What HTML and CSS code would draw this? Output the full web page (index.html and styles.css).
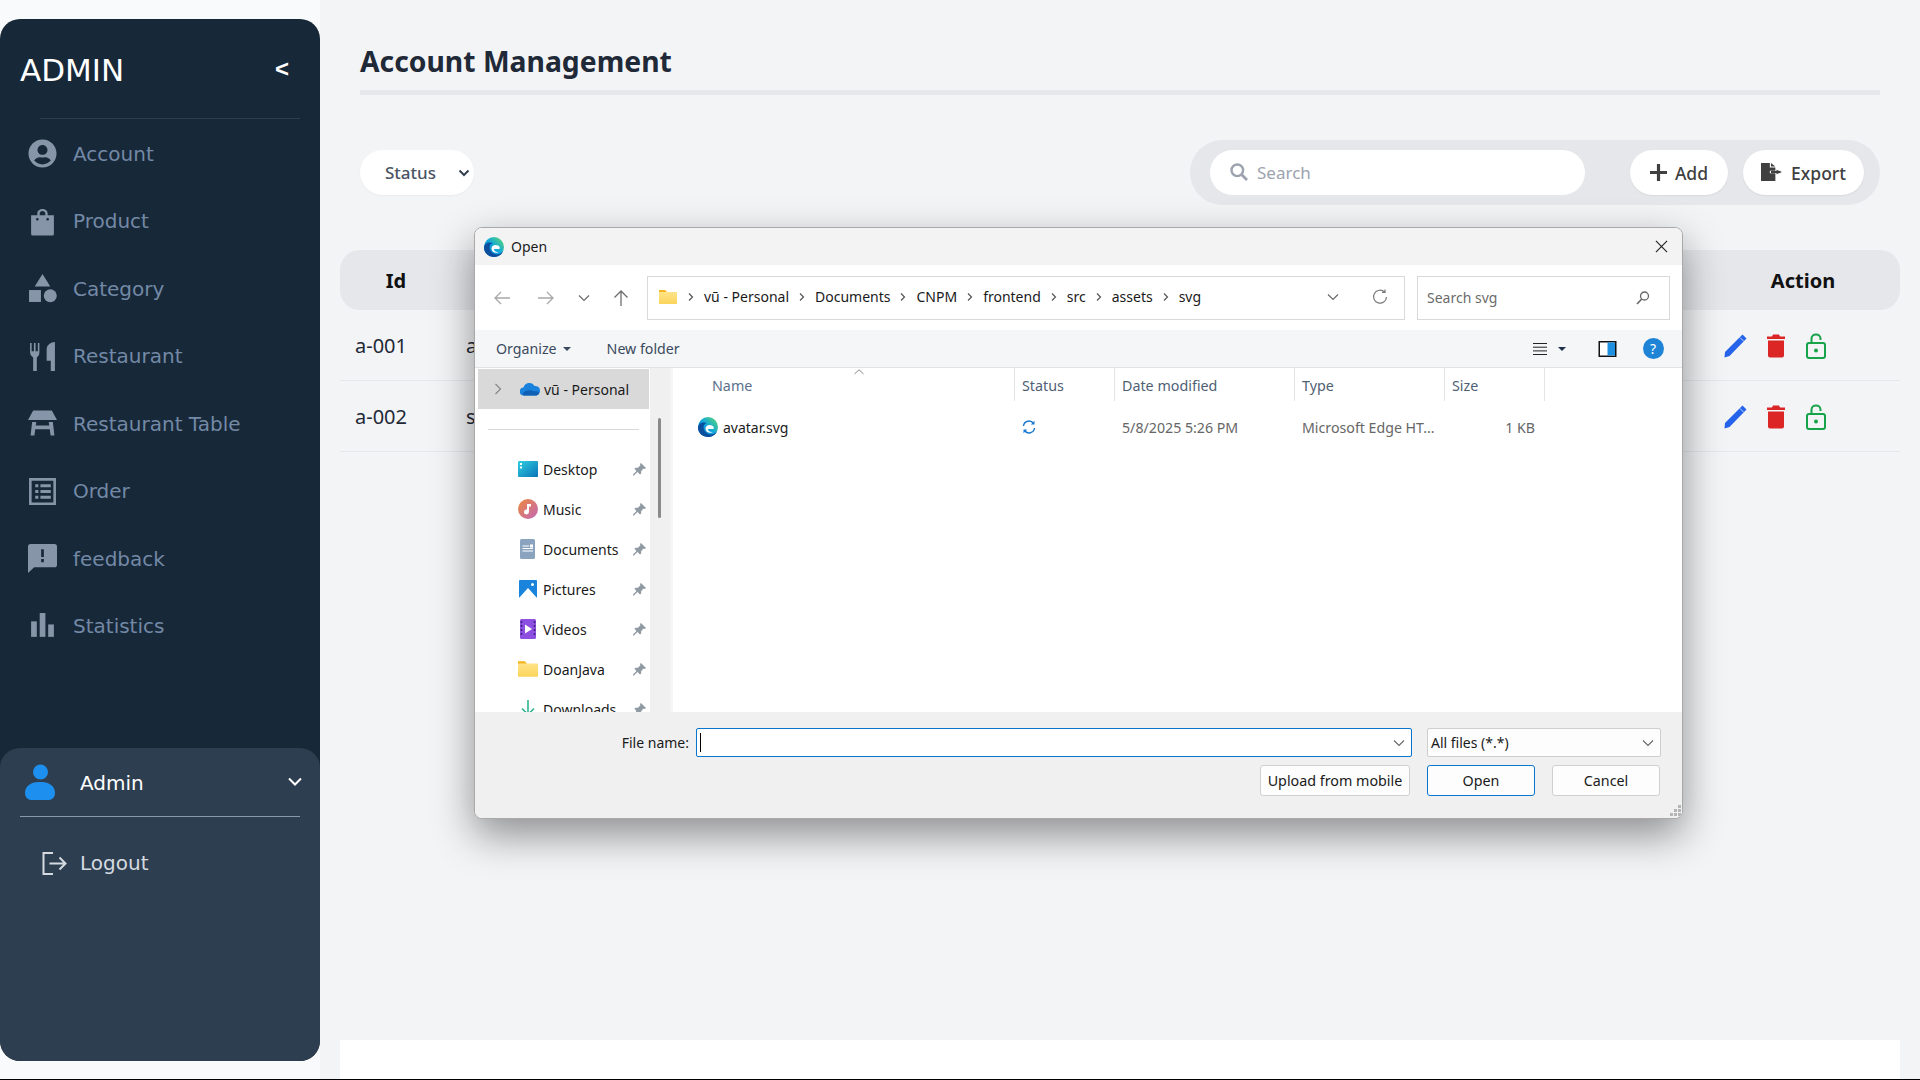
FILE: index.html
```html
<!DOCTYPE html>
<html lang="en">
<head>
<meta charset="utf-8">
<title>Account Management</title>
<link rel="stylesheet" href="styles.css">
</head>
<body>
<svg class="defs" width="0" height="0" aria-hidden="true">
  <defs>
    <linearGradient id="edgeg" x1="0" y1="1" x2="1" y2="0"><stop offset="0" stop-color="#0a72c9"/><stop offset=".5" stop-color="#10a6dc"/><stop offset="1" stop-color="#62dc6c"/></linearGradient>
    <linearGradient id="fold" x1="0" y1="0" x2="0" y2="1"><stop offset="0" stop-color="#ffe68f"/><stop offset="1" stop-color="#fbd45c"/></linearGradient>
    <linearGradient id="desk" x1="0" y1="0" x2="1" y2="1"><stop offset="0" stop-color="#2fd0e0"/><stop offset="1" stop-color="#0b73b8"/></linearGradient>
    <linearGradient id="mus" x1="0" y1="0" x2="1" y2="1"><stop offset="0" stop-color="#ef8a3c"/><stop offset="1" stop-color="#c066b8"/></linearGradient>
    <symbol id="edge" viewBox="0 0 20 20">
      <circle cx="10" cy="10" r="10" fill="url(#edgeg)"/>
      <path d="M0 11C0 6 5 4.500 9 6 5 7 4.500 11.500 7.500 15 10.500 18.500 15.500 18 19 14.500 17.500 18 14 20 10 20 4.500 20 0 16 0 11Z" fill="#0b4f9e"/>
      <path d="M7.500 11.500C7.500 8.500 11 7 14 8.500 16 9.500 16.500 11.500 15 12L10 12C10 14 12 15.500 15 15 12 16.500 7.500 15.500 7.500 11.500Z" fill="#fff"/>
    </symbol>
    <symbol id="pin" viewBox="0 0 14 14"><path d="M8.500 0 14 5.500 12.800 6.500 11.500 6 8.800 8.700 8.800 11.300 7.500 12.500 4.800 9.700 1 13.500 0 13.500 0 12.500 3.800 8.700 1.500 6.300 2.700 5.100 5.300 5.100 8 2.500 7.500 1.200Z" fill="#8f9aa3"/></symbol>
    <symbol id="chev" viewBox="0 0 8 10"><path d="M2 1.500 5.500 5 2 8.500" fill="none" stroke="#555" stroke-width="1.200"/></symbol>
    <symbol id="down" viewBox="0 0 12 8"><path d="M1 1.500 6 6.500 11 1.500" fill="none" stroke="#666" stroke-width="1.100"/></symbol>
    <symbol id="pencil" viewBox="0 0 24 24"><path d="M19.500 .5 23.500 4.500 6.500 22 1.500 23.500 2 18Z" fill="#2563eb"/><path d="M17 3.500 20.800 7.300" stroke="#f3f4f6" stroke-width=".8"/></symbol>
    <symbol id="trash" viewBox="0 0 18 24"><path d="M6 .5H12L13 2.500H18V5H0V2.500H5ZM1 6.500H17V21.500A2 2 0 0 1 15 23.500H3A2 2 0 0 1 1 21.500Z" fill="#dc2626"/></symbol>
    <symbol id="lock" viewBox="0 0 22 26"><path d="M6.500 10V5.500C6.500 0 15.500 0 15.500 5.500V7" fill="none" stroke="#16a34a" stroke-width="2"/><rect x="2" y="10" width="18" height="15" rx="2" fill="none" stroke="#16a34a" stroke-width="2"/><circle cx="11" cy="17.500" r="2" fill="#16a34a"/></symbol>
  </defs>
</svg>

<div class="app">
  <aside class="sidebar">
    <div class="side-top">
      <div class="brand"><span class="brand-name">ADMIN</span><span class="collapse">&lt;</span></div>
      <div class="side-rule"></div>
      <nav class="menu">
        <a class="menu-item"><svg class="mi" viewBox="0 0 512 512"><path d="M256 8C119 8 8 119 8 256s111 248 248 248 248-111 248-248S393 8 256 8zm0 96c48.600 0 88 39.400 88 88s-39.400 88-88 88-88-39.400-88-88 39.400-88 88-88zm0 344c-58.700 0-111.300-26.600-146.500-68.200 18.800-35.400 55.600-59.800 98.500-59.800 2.400 0 4.800.4 7.100 1.100 13 4.200 26.600 6.900 40.900 6.900 14.300 0 28-2.700 40.900-6.900 2.300-.7 4.700-1.100 7.100-1.100 42.900 0 79.700 24.400 98.500 59.800C367.300 421.400 314.700 448 256 448z"/></svg>Account</a>
        <a class="menu-item"><svg class="mi" viewBox="0 0 28 28"><path d="M9 8V6.500C9 .5 19 .5 19 6.500V8H25V26A1.500 1.500 0 0 1 23.500 27.500H4.500A1.500 1.500 0 0 1 3 26V8ZM11.300 8H16.700V6.500C16.700 3 11.300 3 11.300 6.500ZM9 10.500A1.300 1.300 0 0 0 9 13.100 1.300 1.300 0 0 0 9 10.500ZM19 10.500A1.300 1.300 0 0 0 19 13.100 1.300 1.300 0 0 0 19 10.500Z" fill-rule="evenodd"/></svg>Product</a>
        <a class="menu-item"><svg class="mi" viewBox="0 0 28 28"><path d="M14 0 21.500 12H6.500Z"/><rect x="1" y="15.500" width="11.500" height="11.500"/><circle cx="21.500" cy="21" r="6.300"/></svg>Category</a>
        <a class="menu-item"><svg class="mi" viewBox="0 0 28 28"><path d="M2 1H3.500V9H5.700V1H7.300V9H9.500V1H11V10C11 12.500 10 14 8.500 15V28H5V15C3.500 14 2 12.500 2 10ZM26 0V28H22V18H18V7C18 3 22 0 26 0Z"/></svg>Restaurant</a>
        <a class="menu-item"><svg class="mi" viewBox="0 0 28 28"><path d="M5 1.500H23L28 10.500H0ZM4 12.500H8L7.500 16H20.500L20 12.500H24L25.500 25.500H21.800L21 19.500H7L6.200 25.500H2.500Z"/></svg>Restaurant Table</a>
        <a class="menu-item"><svg class="mi" viewBox="0 0 28 28"><path d="M1 1H27V27H1ZM3.500 3.500V24.500H24.500V3.500ZM7 7H10V10H7ZM12 7H22V10H12ZM7 12.500H10V15.500H7ZM12 12.500H22V15.500H12ZM7 18H10V21H7ZM12 18H22V21H12Z" fill-rule="evenodd"/></svg>Order</a>
        <a class="menu-item"><svg class="mi" viewBox="0 0 28 28"><path d="M2.500 0H25.500A2.500 2.500 0 0 1 28 2.500V20A2.500 2.500 0 0 1 25.500 22.500H6L0 28V2.500A2.500 2.500 0 0 1 2.500 0ZM12.700 5V12.500H15.300V5ZM12.700 14.500V17.500H15.300V14.500Z" fill-rule="evenodd"/></svg>feedback</a>
        <a class="menu-item"><svg class="mi" viewBox="0 0 28 28"><rect x="3" y="9" width="5.500" height="15"/><rect x="11.300" y="1" width="5.500" height="23"/><rect x="19.500" y="12" width="5.500" height="12"/></svg>Statistics</a>
      </nav>
    </div>
    <div class="side-user">
      <div class="user-row">
        <svg class="avatar" viewBox="0 0 30 36"><circle cx="15.500" cy="8" r="7.500" fill="#1d90ef"/><path d="M13 18H17C24 18 30 22 30 29 30 33 27 36 24 36H6C3 36 0 33 0 29 0 22 6 18 13 18Z" fill="#1d90ef"/></svg>
        <span class="user-name">Admin</span>
        <svg class="user-chev" viewBox="0 0 14 10"><path d="M1 1.500 7 7.500 13 1.500" fill="none" stroke="#fff" stroke-width="2"/></svg>
      </div>
      <div class="user-rule"></div>
      <a class="logout"><svg class="logout-ic" viewBox="0 0 25 23"><path d="M11 1H1.500V22H11M7.500 11.500H23.500M17.500 5.500 23.500 11.500 17.500 17.500" fill="none" stroke="#d5dae0" stroke-width="2"/></svg>Logout</a>
    </div>
  </aside>

  <main class="content">
    <header class="page-head"><h1 class="page-title">Account Management</h1></header>
    <section class="tools">
      <div class="status-pill"><span>Status</span><svg class="status-chev" viewBox="0 0 12 8"><path d="M1.500 1.500 6 6 10.500 1.500" fill="none" stroke="#374151" stroke-width="2"/></svg></div>
      <div class="tool-group">
        <div class="search-pill"><svg class="search-ic" viewBox="0 0 18 18"><circle cx="7.300" cy="7.300" r="5.800" fill="none" stroke="#9ca3af" stroke-width="2.400"/><path d="M11.500 11.500 17 17" stroke="#9ca3af" stroke-width="2.800"/></svg><span>Search</span></div>
        <button class="tool-btn btn-add"><svg class="tb-ic" viewBox="0 0 16 16"><path d="M6.500 0H9.500V6.500H16V9.500H9.500V16H6.500V9.500H0V6.500H6.500Z" fill="#404040"/></svg>Add</button>
        <button class="tool-btn btn-export"><svg class="tb-ic tb-ex" viewBox="0 0 19 20" preserveAspectRatio="none"><path d="M0 0H8V5H13V8.500H8V11.500H13V20H0ZM9 0 13 4H9ZM14 7.500 19 10 14 12.500V11H9V9H14Z" fill="#404040"/></svg>Export</button>
      </div>
    </section>
    <section class="table">
      <div class="t-head"><span class="th-id">Id</span><span></span><span class="th-act">Action</span></div>
      <div class="t-row"><span class="td-id">a-001</span><span class="td-name">a</span><span class="td-act"><svg class="a-pen"><use href="#pencil"/></svg><svg class="a-trash"><use href="#trash"/></svg><svg class="a-lock"><use href="#lock"/></svg></span></div>
      <div class="t-row"><span class="td-id">a-002</span><span class="td-name">s</span><span class="td-act"><svg class="a-pen"><use href="#pencil"/></svg><svg class="a-trash"><use href="#trash"/></svg><svg class="a-lock"><use href="#lock"/></svg></span></div>
    </section>
    <div class="foot-bar"></div>
  </main>
</div>

<div class="dialog">
  <div class="d-title"><svg class="d-edge"><use href="#edge"/></svg><span class="d-title-text">Open</span><svg class="d-close" viewBox="0 0 14 14"><path d="M1 1 13 13M13 1 1 13" stroke="#222" stroke-width="1.200"/></svg></div>
  <div class="d-addr">
    <svg class="nav-back" viewBox="0 0 16 14"><path d="M16 7H1M7 1 1 7 7 13" fill="none" stroke="#a8a8a8" stroke-width="1.300"/></svg>
    <svg class="nav-fwd" viewBox="0 0 16 14"><path d="M0 7H15M9 1 15 7 9 13" fill="none" stroke="#a8a8a8" stroke-width="1.300"/></svg>
    <svg class="nav-dn"><use href="#down"/></svg>
    <svg class="nav-up" viewBox="0 0 16 16"><path d="M8 16V1M1.500 7.500 8 1 14.500 7.500" fill="none" stroke="#6e6e6e" stroke-width="1.300"/></svg>
    <div class="addr-box">
      <svg class="addr-fold" viewBox="0 0 18 14"><path d="M0 0H6L8 2H18V14H0Z" fill="url(#fold)"/><path d="M0 0H6L8 2H0Z" fill="#f4b622"/></svg>
      <svg class="cr"><use href="#chev"/></svg><span>vũ - Personal</span>
      <svg class="cr"><use href="#chev"/></svg><span>Documents</span>
      <svg class="cr"><use href="#chev"/></svg><span>CNPM</span>
      <svg class="cr"><use href="#chev"/></svg><span>frontend</span>
      <svg class="cr"><use href="#chev"/></svg><span>src</span>
      <svg class="cr"><use href="#chev"/></svg><span>assets</span>
      <svg class="cr"><use href="#chev"/></svg><span>svg</span>
      <svg class="addr-dn"><use href="#down"/></svg>
      <svg class="addr-ref" viewBox="0 0 16 16"><path d="M12.500 3A6.500 6.500 0 1 0 14.500 8M13 .5V3.500H10" fill="none" stroke="#777" stroke-width="1.200"/></svg>
    </div>
    <div class="search-box"><span>Search svg</span><svg class="sb-ic" viewBox="0 0 14 14"><circle cx="8.500" cy="5" r="4" fill="none" stroke="#666" stroke-width="1.300"/><path d="M5.800 8 1 13" stroke="#666" stroke-width="1.600"/></svg></div>
  </div>
  <div class="d-bar">
    <span class="org">Organize</span><span class="caret"></span><span class="newf">New folder</span>
    <svg class="view-ic" viewBox="0 0 14 12"><path d="M0 .5H14M0 4.200H14M0 7.900H14M0 11.500H14" stroke="#222" stroke-width="1"/></svg><span class="caret caret-dark"></span>
    <svg class="pane-ic" viewBox="0 0 18 16"><rect x=".75" y=".75" width="16.500" height="14.500" fill="#fff" stroke="#111" stroke-width="1.500"/><rect x="9" y="1.500" width="7.500" height="13" fill="#1f8fe0"/></svg>
    <span class="help">?</span>
  </div>
  <div class="d-body">
    <div class="d-nav">
      <div class="n-sel"><svg class="n-chev" viewBox="0 0 8 12"><path d="M1.500 1 6.500 6 1.500 11" fill="none" stroke="#888" stroke-width="1.200"/></svg><svg class="n-ic n-cloud" viewBox="0 0 20 13"><path d="M4 13A4 4 0 0 1 3.500 5 6 6 0 0 1 14.500 3.500 4.500 4.500 0 0 1 16 13Z" fill="#1a82dc"/><path d="M4 13C1 13 4 8 8 8 11 7 14 9 15 9 17 8 20 10 19 11 18.500 12.500 17 13 16 13Z" fill="#0f5fb4"/></svg><span>vũ - Personal</span></div>
      <div class="n-div"><i></i></div>
      <div class="n-item"><svg class="n-ic" viewBox="0 0 20 16"><rect width="20" height="16" rx="1" fill="url(#desk)"/><rect x="2" y="2" width="2" height="2" fill="#fff"/><rect x="2" y="5.500" width="2" height="2" fill="#fff"/></svg><span>Desktop</span><svg class="n-pin"><use href="#pin"/></svg></div>
      <div class="n-item"><svg class="n-ic" viewBox="0 0 20 20"><circle cx="10" cy="10" r="10" fill="url(#mus)"/><path d="M9 5H13V7.500H11V13A2.500 2.500 0 1 1 9 10.600Z" fill="#fff"/></svg><span>Music</span><svg class="n-pin"><use href="#pin"/></svg></div>
      <div class="n-item"><svg class="n-ic" viewBox="0 0 20 20"><rect x="2" width="15" height="20" rx="1.500" fill="#8aa4c0"/><path d="M4.500 7H11M4.500 9.500H15M4.500 12H15" stroke="#fff" stroke-width="1"/><rect x="12" y="5.500" width="3" height="3" fill="#fff"/></svg><span>Documents</span><svg class="n-pin"><use href="#pin"/></svg></div>
      <div class="n-item"><svg class="n-ic" viewBox="0 0 20 20"><rect x="1" y="1" width="18" height="18" rx="1" fill="#1a84dc"/><path d="M1 19 10 9 19 19Z" fill="#fff"/><circle cx="14.500" cy="5.500" r="1.500" fill="#fff"/></svg><span>Pictures</span><svg class="n-pin"><use href="#pin"/></svg></div>
      <div class="n-item"><svg class="n-ic" viewBox="0 0 20 20"><rect x="2" width="16" height="20" rx="1.500" fill="#8d4fe0"/><path d="M7 5.500 14 10 7 14.500Z" fill="#fff"/><path d="M3.500 2V18M16.500 2V18" stroke="#3c2080" stroke-width="1.500" stroke-dasharray="2 2"/></svg><span>Videos</span><svg class="n-pin"><use href="#pin"/></svg></div>
      <div class="n-item"><svg class="n-ic" viewBox="0 0 18 14"><path d="M0 0H6L8 2H18V14H0Z" fill="url(#fold)"/><path d="M0 0H6L8 2H0Z" fill="#f4b622"/></svg><span>DoanJava</span><svg class="n-pin"><use href="#pin"/></svg></div>
      <div class="n-item"><svg class="n-ic" viewBox="0 0 20 20"><path d="M10 1V15M4 9.500 10 15.500 16 9.500M3 19H17" fill="none" stroke="#2fb58f" stroke-width="1.600"/></svg><span>Downloads</span><svg class="n-pin"><use href="#pin"/></svg></div>
    </div>
    <div class="d-scroll"><i class="thumb"></i></div>
    <div class="d-gut"></div>
    <div class="d-files">
      <svg class="sort" viewBox="0 0 10 6"><path d="M.5 5 5 .8 9.500 5" fill="none" stroke="#888" stroke-width="1"/></svg>
      <div class="f-head"><span class="fh fh-name">Name</span><span class="fh">Status</span><span class="fh">Date modified</span><span class="fh">Type</span><span class="fh">Size</span></div>
      <div class="f-row">
        <span class="fc fc-name"><svg class="f-edge"><use href="#edge"/></svg>avatar.svg</span>
        <span class="fc"><svg class="sync" viewBox="0 0 14 14"><path d="M1.500 6A5.500 5.500 0 0 1 11.500 3.500M12.500 8A5.500 5.500 0 0 1 2.500 10.500" fill="none" stroke="#1878d0" stroke-width="1.400"/><path d="M12.500 .8V4.500H8.800ZM1.500 13.200V9.500H5.200Z" fill="#1878d0"/></svg></span>
        <span class="fc fc-dim">5/8/2025 5:26 PM</span>
        <span class="fc fc-dim">Microsoft Edge HT...</span>
        <span class="fc fc-dim fc-size">1 KB</span>
      </div>
    </div>
  </div>
  <div class="d-foot">
    <div class="foot-line">
      <label class="fn-label">File name:</label>
      <div class="fn-input"><i class="cursor"></i><svg class="fld-dn"><use href="#down"/></svg></div>
      <div class="fn-filter"><span>All files (*.*)</span><svg class="fld-dn"><use href="#down"/></svg></div>
    </div>
    <div class="foot-line foot-btns">
      <button class="d-btn d-upload">Upload from mobile</button>
      <button class="d-btn d-open">Open</button>
      <button class="d-btn d-cancel">Cancel</button>
    </div>
    <svg class="grip" viewBox="0 0 12 12"><path d="M9 0h3v3H9zM5 4h3v3H5zM9 4h3v3H9zM1 8h3v3H1zM5 8h3v3H5zM9 8h3v3H9z" fill="#b5b5b5"/></svg>
  </div>
</div>
</body>
</html>
```

FILE: styles.css
```css
* { box-sizing: border-box; }
html, body { margin: 0; height: 1080px; overflow: hidden; }
body { background: #f9fafb; border-bottom: 1px solid #000; font-family: "Noto Sans", sans-serif; position: relative; }
.defs { position: absolute; }
.app { display: flex; height: 1079px; }

/* sidebar */
.sidebar { width: 320px; flex: none; margin: 19px 0 18px; border-radius: 20px; background: #172839; display: flex; flex-direction: column; overflow: hidden; font-family: "DejaVu Sans", sans-serif; }
.side-top { flex: 1; }
.brand { height: 99px; padding: 3px 31px 0 20px; display: flex; justify-content: space-between; align-items: center; }
.brand-name { font-size: 31px; color: #fff; }
.collapse { font: 700 24px "Liberation Sans", sans-serif; color: #fff; margin-top: -2px; }
.side-rule { height: 1px; margin: 0 20px 0 40px; background: #2d3e50; }
.menu { display: flex; flex-direction: column; padding-top: 1px; }
.menu-item { height: 67.500px; display: flex; align-items: center; padding-left: 28px; color: #7389a5; font-size: 20px; }
.mi { width: 29px; height: 29px; margin-right: 16px; fill: #8795a8; flex: none; }
.side-user { height: 313px; background: #2d3e50; border-radius: 20px; flex: none; }
.user-row { height: 68px; display: flex; align-items: center; padding: 0 18px 0 25px; }
.avatar { width: 30px; height: 36px; }
.user-name { font-size: 20px; color: #fff; margin-left: 25px; flex: 1; margin-top: 2px; }
.user-chev { width: 14px; height: 10px; }
.user-rule { height: 1px; margin: 0 20px; background: #8a99a9; }
.logout { display: flex; align-items: center; margin-top: 34px; padding-left: 42px; color: #d5dae0; font-size: 20px; line-height: 24px; }
.logout-ic { width: 25px; height: 23px; margin-right: 13px; }

/* main */
.content { flex: 1; display: flex; flex-direction: column; background: #f3f4f6; padding: 0 20px; }
.page-head { margin: 42px 20px 0; height: 53px; border-bottom: 5px solid #e5e7eb; }
.page-title { margin: 0; font-size: 28.300px; line-height: 38px; font-weight: 700; color: #1f2937; }
.tools { margin: 45px 20px 0; height: 65px; display: flex; justify-content: space-between; align-items: center; }
.status-pill { width: 114px; height: 45px; border-radius: 23px; background: #fff; display: flex; align-items: center; padding-left: 25px; font-size: 17px; font-weight: 500; color: #4b5563; box-shadow: 0 1px 2px rgba(0,0,0,.04); }
.status-pill span { flex: 1; }
.status-chev { width: 12px; height: 8px; margin-right: 4px; }
.tool-group { width: 690px; height: 65px; background: #e5e7eb; border-radius: 33px; display: flex; align-items: center; padding: 0 15px 0 20px; }
.search-pill { width: 375px; height: 45px; border-radius: 23px; background: #fff; display: flex; align-items: center; padding-left: 20px; font-size: 17px; color: #9ca3af; }
.search-ic { width: 18px; height: 18px; margin-right: 9px; margin-top: -2px; }
.tool-btn { height: 45px; border: 0; border-radius: 23px; background: #fff; display: flex; align-items: center; justify-content: center; font: 500 17.500px "Noto Sans", sans-serif; color: #404040; padding: 0; box-shadow: 0 1px 2px rgba(0,0,0,.06); }
.btn-add { width: 98px; margin-left: 45px; }
.btn-export { width: 121px; margin-left: 15px; }
.tb-ic { width: 17px; height: 17px; margin-right: 8px; margin-top: -1px; }
.tb-ex { width: 21px; height: 18px; margin-right: 9px; margin-top: -2px; }

.table { margin-top: 45px; }
.t-head { height: 60px; background: #e5e7eb; border-radius: 20px; display: grid; grid-template-columns: 112px 1fr 194px; align-items: center; font-size: 20px; font-weight: 700; color: #111; }
.th-id, .th-act { text-align: center; }
.t-row { height: 71px; border-bottom: 1px solid #e5e7eb; display: grid; grid-template-columns: 110px 1fr 194px; align-items: center; font-size: 20px; color: #1f2937; }
.td-id { padding-left: 15px; }
.td-name { padding-left: 16px; }
.td-act { display: flex; align-items: center; padding: 2px 0 0 17px; }
.a-pen { width: 24px; height: 24px; margin-right: 20px; }
.a-trash { width: 18px; height: 24px; margin-right: 20px; }
.a-lock { width: 22px; height: 26px; }
.foot-bar { margin-top: auto; height: 39px; background: #fff; }

/* dialog */
.dialog { position: absolute; left: 474px; top: 227px; width: 1209px; height: 592px; background: #fff; border: 1px solid #a9a9a9; border-radius: 8px; box-shadow: 0 16px 40px rgba(0,0,0,.42); overflow: hidden; display: flex; flex-direction: column; font-size: 14px; color: #1a1a1a; }
.d-title { height: 37px; flex: none; background: #f3f3f3; display: flex; align-items: center; padding: 0 14px 0 9px; }
.d-edge { width: 20px; height: 20px; margin-right: 7px; }
.d-title-text { flex: 1; }
.d-close { width: 13px; height: 13px; margin-right: 0; }
.d-addr { height: 65px; flex: none; background: #fff; display: flex; align-items: center; padding: 0 11px 0 19px; }
.nav-back { width: 16px; height: 14px; margin-right: 28px; }
.nav-fwd { width: 16px; height: 14px; margin-right: 24px; }
.nav-dn { width: 12px; height: 8px; margin-right: 23px; }
.nav-up { width: 16px; height: 16px; margin-right: 18px; }
.addr-box { width: 758px; height: 44px; border: 1px solid #d9d9d9; display: flex; align-items: center; padding: 0 0 2px 11px; gap: 9px; color: #1a1a1a; }
.addr-fold { width: 18px; height: 14px; margin-right: 1px; }
.cr { width: 8px; height: 10px; }
.addr-dn { width: 12px; height: 8px; margin-left: auto; margin-right: 4px; }
.addr-ref { width: 16px; height: 16px; margin: 0 16px 0 20px; }
.search-box { width: 253px; height: 44px; margin-left: 12px; border: 1px solid #d9d9d9; display: flex; align-items: center; justify-content: space-between; padding: 0 19px 0 9px; color: #6b6b6b; }
.sb-ic { width: 14px; height: 14px; }
.d-bar { height: 38px; flex: none; background: #f5f6f7; display: flex; align-items: center; padding-left: 21px; color: #3a4a5e; border-bottom: 1px solid #e3e3e3; }
.org, .newf { font-size: 14.200px; }
.caret { width: 0; height: 0; border: 4px solid transparent; border-top-color: #3a4a5e; border-bottom: 0; margin-left: 6px; }
.newf { margin-left: 36px; }
.view-ic { width: 14px; height: 12px; margin-left: 853px; }
.caret-dark { margin-left: 11px; border-top-color: #1f2e4a; }
.pane-ic { width: 19px; height: 16px; margin-left: 32px; }
.help { width: 21px; height: 21px; margin-left: 26px; border-radius: 50%; background: #1f84d6; color: #fff; text-align: center; font-size: 14px; line-height: 21px; }
.d-body { height: 344px; flex: none; display: flex; background: #fff; }
.d-nav { width: 175px; flex: none; overflow: hidden; }
.n-sel { height: 40px; margin: 1px 1px 0 3px; background: #d9d9d9; display: flex; align-items: center; padding-left: 16px; }
.n-chev { width: 8px; height: 12px; margin-right: 18px; }
.n-cloud { width: 20px; height: 13px; margin-right: 4px !important; }
.n-div { height: 40px; display: flex; align-items: center; padding: 0 11px 0 13px; }
.n-div i { display: block; width: 100%; height: 1px; background: #d9d9d9; }
.n-item { height: 40px; display: flex; align-items: center; padding-left: 43px; }
.n-ic { width: 20px; height: 20px; margin-right: 5px; flex: none; }
.n-item span { flex: 1; }
.n-pin { width: 13px; height: 13px; margin-right: 4px; }
.d-scroll { width: 20px; flex: none; background: #f0f0f0; padding: 50px 0 0 8px; }
.thumb { display: block; width: 3px; height: 100px; background: #8a8a8a; border-radius: 2px; }
.d-gut { width: 3px; flex: none; background: #f5f5f5; }
.d-files { flex: 1; position: relative; background: #fff; }
.sort { position: absolute; left: 181px; top: 1px; width: 10px; height: 6px; }
.f-head, .f-row { display: grid; grid-template-columns: 342px 100px 180px 150px 100px; }
.f-head { height: 33px; color: #4f5f75; font-size: 14.300px; }
.fh { border-right: 1px solid #e5e5e5; padding: 6px 0 0 7px; line-height: 24px; }
.fh-name { padding-left: 39px; color: #5b6f8c; }
.f-row { height: 34px; margin-top: 9px; align-items: center; }
.fc { padding-left: 7px; display: flex; align-items: center; font-size: 14.200px; }
.fc-name { padding-left: 25px; font-size: 14px; }
.f-edge { width: 20px; height: 20px; margin-right: 5px; }
.fc-dim { color: #666; }
.fc-size { justify-content: flex-end; padding-right: 10px; }
.sync { width: 14px; height: 14px; }
.d-foot { flex: 1; background: #f0f0f0; padding: 16px 21px 0 0; position: relative; }
.foot-line { display: flex; justify-content: flex-end; align-items: center; }
.fn-label { margin-right: 7px; }
.fn-input { width: 716px; height: 29px; background: #fff; border: 1px solid #0a74d1; border-radius: 2px; display: flex; align-items: center; justify-content: space-between; padding: 0 6px 0 3px; }
.cursor { display: block; width: 1px; height: 19px; background: #000; }
.fld-dn { width: 12px; height: 8px; }
.fn-filter { width: 234px; height: 29px; margin-left: 15px; background: #fdfdfd; border: 1px solid #cfcfcf; border-radius: 2px; display: flex; align-items: center; justify-content: space-between; padding: 0 6px 0 3px; }
.foot-btns { margin-top: 8px; }
.d-btn { height: 31px; background: #fdfdfd; border: 1px solid #d0d0d0; border-radius: 3px; font: 14.300px "Noto Sans", sans-serif; color: #1a1a1a; padding: 0; }
.d-upload { width: 150px; }
.d-open { width: 108px; margin-left: 17px; border-color: #0a74d1; }
.d-cancel { width: 108px; margin-left: 17px; margin-right: 1px; }
.grip { position: absolute; right: 1px; bottom: 1px; width: 12px; height: 12px; }
```
